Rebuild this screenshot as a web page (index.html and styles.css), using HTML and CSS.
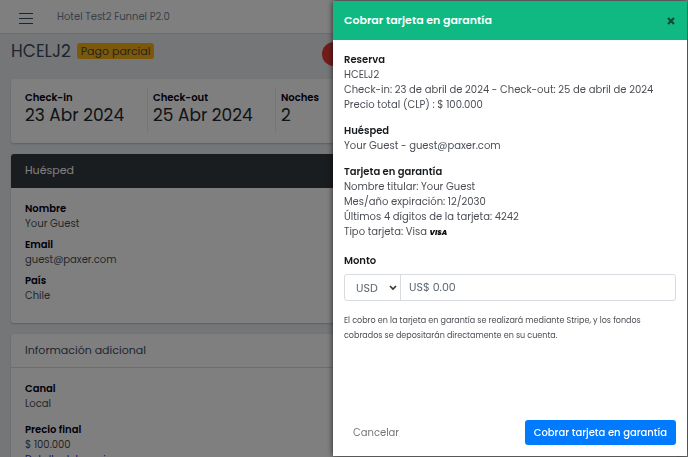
FILE: index.html
```html
<!DOCTYPE html>
<html lang="es">
<head>
  <meta charset="UTF-8">
  <meta name="viewport" content="width=device-width, initial-scale=1.0">
  <title>Reserva HCELJ2</title>
  <link rel="stylesheet" href="styles.css">
</head>
<body>
  <header class="topbar">
    <button type="button" class="menu-toggle">
      <svg width="14" height="14" viewBox="0 0 14 14" fill="none" stroke="#3c4b64" stroke-width="1"><path d="M0 1.5h14M0 6.5h14M0 11.5h14"/></svg>
    </button>
    <span class="hotel">Hotel Test2 Funnel P2.0</span>
  </header>

  <main class="content">
    <div class="title-row">
      <div class="title">
        <h1>HCELJ2</h1>
        <span class="badge">Pago parcial</span>
      </div>
      <button type="button" class="round-btn"></button>
    </div>

    <section class="card dates">
      <div class="date">
        <strong>Check-in</strong>
        <span>23 Abr 2024</span>
      </div>
      <div class="date">
        <strong>Check-out</strong>
        <span>25 Abr 2024</span>
      </div>
      <div class="date">
        <strong>Noches</strong>
        <span>2</span>
      </div>
    </section>

    <section class="card">
      <h2 class="card-header dark">Huésped</h2>
      <dl class="card-body guest">
        <div>
          <dt>Nombre</dt>
          <dd>Your Guest</dd>
        </div>
        <div>
          <dt>Email</dt>
          <dd>guest@paxer.com</dd>
        </div>
        <div>
          <dt>País</dt>
          <dd>Chile</dd>
        </div>
      </dl>
    </section>

    <section class="card">
      <h2 class="card-header">Información adicional</h2>
      <dl class="card-body info">
        <div>
          <dt>Canal</dt>
          <dd>Local</dd>
        </div>
        <div>
          <dt>Precio final</dt>
          <dd>$ 100.000</dd>
          <dd><a href="#">Detalle del precio</a></dd>
        </div>
      </dl>
    </section>
  </main>

  <div class="backdrop"></div>

  <form class="drawer">
    <div class="drawer-header">
      <h2>Cobrar tarjeta en garantía</h2>
      <button type="button" class="close">
        <svg width="8" height="8" viewBox="0 0 8 8" stroke="#0a4a35" stroke-width="2.2"><path d="M1 1l6 6M7 1l-6 6"/></svg>
      </button>
    </div>

    <div class="drawer-body">
      <div class="block">
        <h3>Reserva</h3>
        <p>HCELJ2</p>
        <p>Check-in: 23 de abril de 2024 - Check-out: 25 de abril de 2024</p>
        <p>Precio total (CLP) : $ 100.000</p>
      </div>
      <div class="block">
        <h3>Huésped</h3>
        <p>Your Guest - guest@paxer.com</p>
      </div>
      <div class="block">
        <h3>Tarjeta en garantía</h3>
        <p>Nombre titular: Your Guest</p>
        <p>Mes/año expiración: 12/2030</p>
        <p>Últimos 4 dígitos de la tarjeta: 4242</p>
        <p>Tipo tarjeta: Visa <span class="visa">VISA</span></p>
      </div>

      <label class="amount-label" id="amount-label" for="amount">Monto</label>
      <div class="amount">
        <div class="currency">
          <select id="currency" aria-labelledby="amount-label">
            <option>USD</option>
          </select>
          <svg width="8" height="6" viewBox="0 0 8 6" fill="none" stroke="#333" stroke-width="1.6"><path d="M1 1l3 3 3-3"/></svg>
        </div>
        <input type="text" id="amount" value="US$ 0.00">
      </div>
      <p class="help">El cobro en la tarjeta en garantía se realizará mediante Stripe, y los fondos cobrados se depositarán directamente en su cuenta.</p>
    </div>

    <div class="drawer-footer">
      <button type="button" class="btn">Cancelar</button>
      <button type="button" class="btn btn-primary">Cobrar tarjeta en garantía</button>
    </div>
  </form>
</body>
</html>
```
FILE: styles.css
```css
* {
  box-sizing: border-box;
}

body {
  margin: 0;
  height: 100vh;
  overflow: hidden;
  background-color: #ebedef;
  color: #4a4e54;
  font-family: Poppins, Inter, "Liberation Sans", sans-serif;
  font-size: 10px;
  line-height: 15px;
}

h1, h2, h3, p, dl, dd {
  margin: 0;
}

button, input, select {
  font-family: inherit;
}

button {
  border: none;
  background: none;
  padding: 0;
  cursor: pointer;
}

.topbar {
  display: flex;
  align-items: center;
  gap: 24px;
  height: 34px;
  padding: 0 19px;
  background-color: #fff;
  border-bottom: 1px solid #d8dbe0;
  color: #768192;
}

.menu-toggle {
  display: flex;
  padding-top: 4px;
}

.content {
  padding: 8px 11px;
}

.title-row {
  display: flex;
  margin-bottom: 13px;
}

.title {
  display: flex;
  align-items: center;
  align-self: flex-start;
  gap: 6px;
  width: 311px;
  height: 18px;
}

h1 {
  font-size: 17px;
  font-weight: 400;
  color: #3c4b64;
}

.badge {
  padding: 0 4px;
  border-radius: 3px;
  background-color: #f9b115;
  font-size: 11px;
  line-height: 16px;
  color: #4f4a3c;
}

.round-btn {
  width: 24px;
  height: 24px;
  border-radius: 50%;
  background-color: #e53935;
}

.card {
  margin-bottom: 11px;
  border-radius: 3px;
  background-color: #fff;
  box-shadow: 0 1px 2px rgba(60, 75, 100, 0.3);
}

.dates {
  display: flex;
  padding: 9px 9px 10px;
}

.date {
  display: flex;
  flex-direction: column;
  width: 128px;
  height: 45px;
  padding: 2px 5px;
  border-right: 1px solid #ebedef;
}

.date:last-child {
  border-right: none;
}

.date strong {
  font-weight: 600;
  color: #000015;
}

.date span {
  font-size: 17px;
  line-height: 20px;
  color: #23282c;
}

.card-header {
  padding: 9px 14px;
  border-bottom: 1px solid #d8dbe0;
  font-size: 11px;
  font-weight: 400;
  color: #3c4b64;
}

.card-header.dark {
  border-radius: 3px 3px 0 0;
  border-color: #343a40;
  background-color: #343a40;
  color: #fff;
}

.card-body {
  display: flex;
  flex-direction: column;
  gap: 6px;
  padding: 13px 14px 20px;
}

.guest {
  min-height: 133px;
}

.info {
  gap: 11px;
}

dt {
  font-weight: 600;
  color: #000015;
}

a {
  color: #321fdb;
  text-decoration: none;
}

.backdrop {
  position: fixed;
  inset: 0;
  background-color: rgba(0, 0, 0, 0.5);
}

.drawer {
  position: fixed;
  top: 1px;
  right: 1px;
  bottom: 1px;
  display: flex;
  flex-direction: column;
  width: 354px;
  background-color: #fff;
  box-shadow: 0 0 6px rgba(0, 0, 0, 0.7);
}

.drawer-header {
  display: flex;
  align-items: center;
  justify-content: space-between;
  padding: 12px 12px 12px 11px;
  background-color: #10b981;
  color: #fff;
}

.drawer-header h2 {
  font-size: 11px;
  font-weight: 600;
}

.close {
  display: flex;
}

.drawer-body {
  flex: 1;
  padding: 12px 11px;
}

.block {
  margin-bottom: 11px;
}

h3, .amount-label {
  font-size: 10px;
  font-weight: 600;
  color: #181b1e;
}

.visa {
  font-size: 7px;
  font-style: italic;
  font-weight: 900;
  color: #111;
}

.amount-label {
  display: block;
  padding: 2px 0 6px;
}

.amount {
  display: flex;
  height: 27px;
  margin-bottom: 12px;
  border: 1px solid #d8dbe0;
  border-radius: 3px;
}

.currency {
  display: flex;
  align-items: center;
  width: 56px;
  padding-right: 3px;
  border-right: 1px solid #d8dbe0;
}

.currency select {
  flex: 1;
  min-width: 0;
  appearance: none;
  padding: 0 0 0 11px;
  border: none;
  background: none;
  font-size: 11px;
  color: #5c6873;
}

.amount input {
  flex: 1;
  min-width: 0;
  padding: 0 8px;
  border: none;
  background: none;
  font-size: 11px;
  color: #5c6873;
}

.help {
  font-size: 8px;
}

.drawer-footer {
  display: flex;
  justify-content: space-between;
  padding: 11px;
}

.btn {
  padding: 5px 9px;
  border-radius: 3px;
  font-size: 10px;
  line-height: 15px;
  color: #777;
}

.btn-primary {
  background-color: #007bff;
  font-weight: 500;
  color: #fff;
}
```
